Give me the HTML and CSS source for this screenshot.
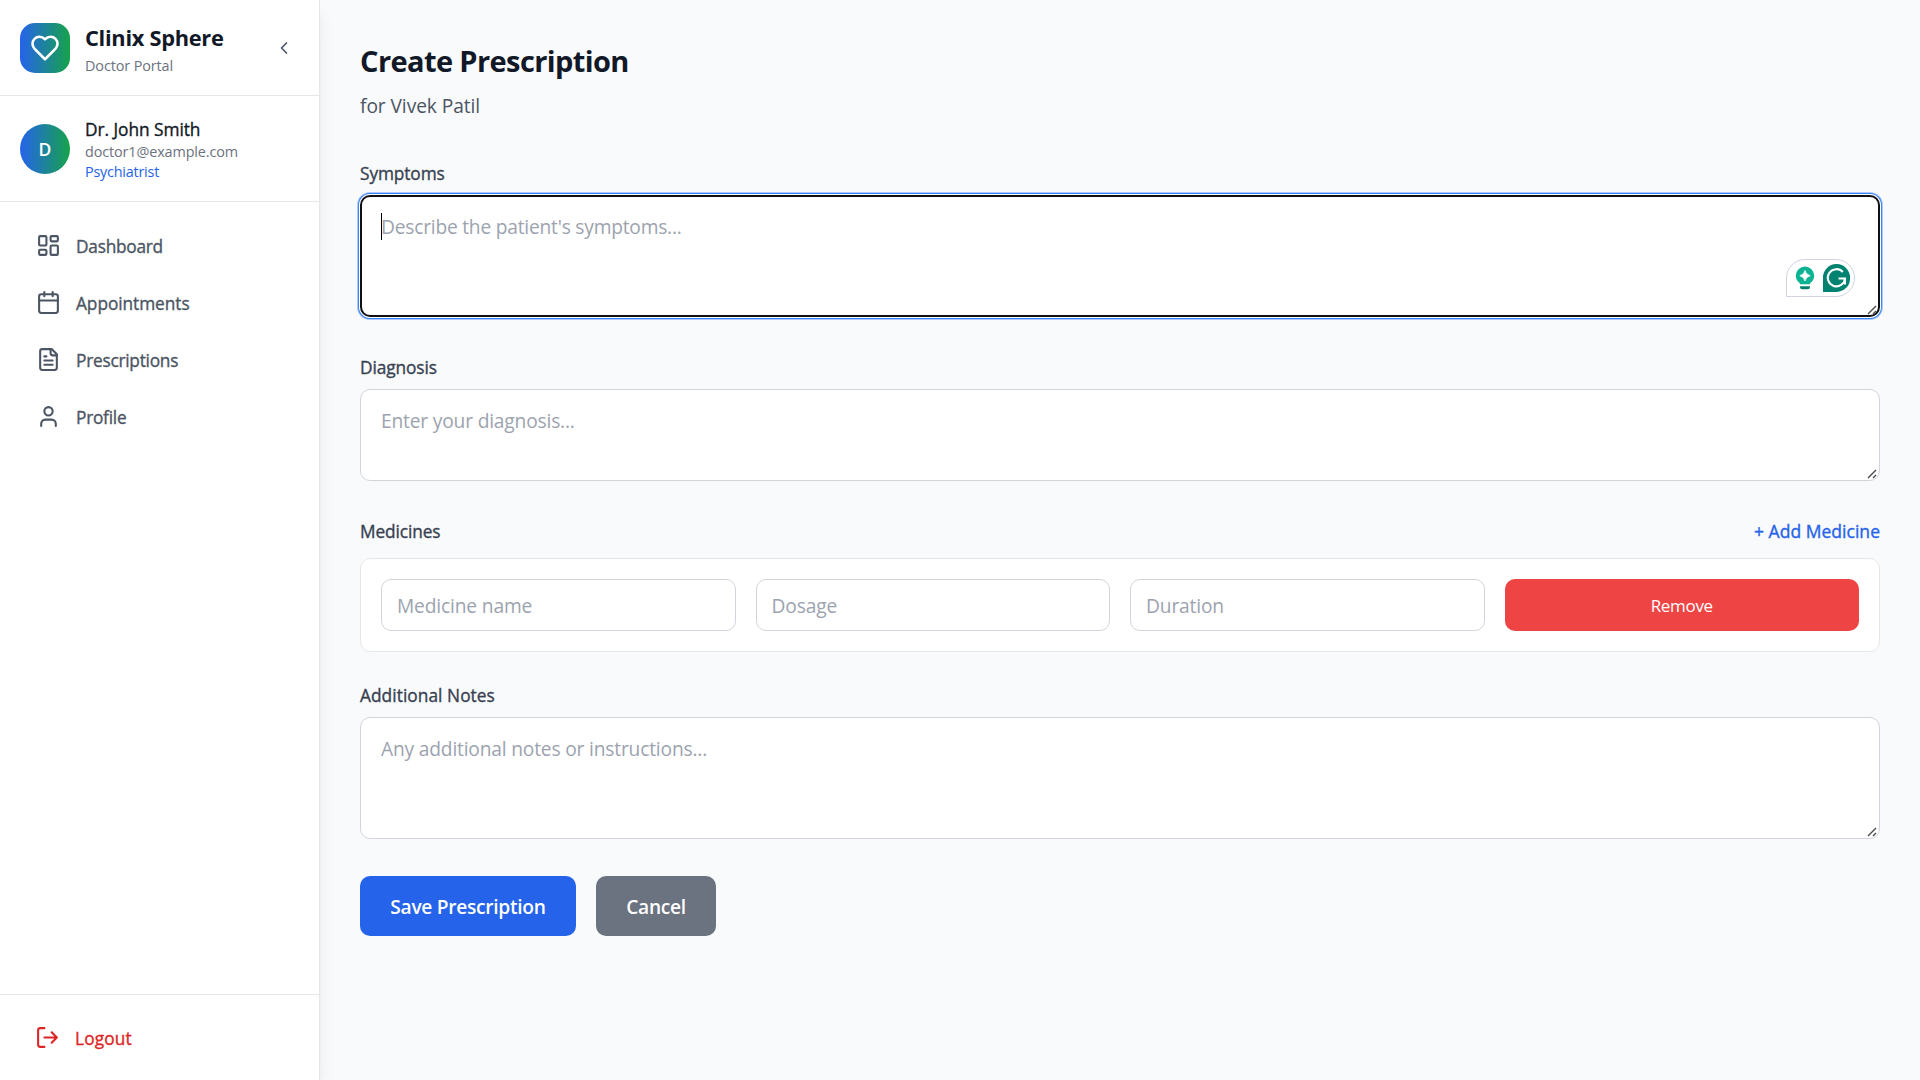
FILE: index.html
```html
<!DOCTYPE html>
<html lang="en">
<head>
<meta charset="utf-8">
<title>Clinix Sphere - Create Prescription</title>
<link rel="stylesheet" href="styles.css">
</head>
<body>
<div class="app">
  <aside class="sidebar">
    <header class="brand">
      <div class="brand-logo">
        <svg class="icon icon-heart" viewBox="0 0 24 24"><path d="M19 14c1.49-1.46 3-3.21 3-5.5A5.5 5.5 0 0 0 16.5 3c-1.76 0-3 .5-4.5 2-1.5-1.5-2.740-2-4.500-2A5.500 5.500 0 0 0 2 8.500c0 2.300 1.500 4.050 3 5.500l7 7Z"/></svg>
      </div>
      <div class="brand-text">
        <h1 class="brand-name">Clinix Sphere</h1>
        <p class="brand-sub">Doctor Portal</p>
      </div>
      <button class="collapse" type="button" aria-label="Collapse sidebar">
        <svg class="icon icon-chevron" viewBox="0 0 24 24"><path d="m15 18-6-6 6-6"/></svg>
      </button>
    </header>
    <section class="user">
      <div class="avatar">D</div>
      <div class="user-text">
        <p class="user-name">Dr. John Smith</p>
        <p class="user-mail">doctor1@example.com</p>
        <p class="user-role">Psychiatrist</p>
      </div>
    </section>
    <nav class="nav">
      <a class="nav-item"><svg class="icon" viewBox="0 0 24 24"><rect width="7" height="9" x="3" y="3" rx="1"/><rect width="7" height="5" x="14" y="3" rx="1"/><rect width="7" height="9" x="14" y="12" rx="1"/><rect width="7" height="5" x="3" y="16" rx="1"/></svg><span>Dashboard</span></a>
      <a class="nav-item nav-wide"><svg class="icon" viewBox="0 0 24 24"><path d="M8 2v4M16 2v4"/><rect width="18" height="18" x="3" y="4" rx="2"/><path d="M3 10h18"/></svg><span>Appointments</span></a>
      <a class="nav-item"><svg class="icon" viewBox="0 0 24 24"><path d="M15 2H6a2 2 0 0 0-2 2v16a2 2 0 0 0 2 2h12a2 2 0 0 0 2-2V7Z"/><path d="M14 2v4a2 2 0 0 0 2 2h4M10 9H8M16 13H8M16 17H8"/></svg><span>Prescriptions</span></a>
      <a class="nav-item"><svg class="icon" viewBox="0 0 24 24"><path d="M19 21v-2a4 4 0 0 0-4-4H9a4 4 0 0 0-4 4v2"/><circle cx="12" cy="7" r="4"/></svg><span>Profile</span></a>
    </nav>
    <footer class="sidebar-foot">
      <a class="logout"><svg class="icon" viewBox="0 0 24 24"><path d="M9 21H5a2 2 0 0 1-2-2V5a2 2 0 0 1 2-2h4M16 17l5-5-5-5M21 12H9"/></svg><span>Logout</span></a>
    </footer>
  </aside>

  <main class="main">
    <h2 class="page-title">Create Prescription</h2>
    <p class="page-sub">for Vivek Patil</p>

    <form class="form">
      <div class="field">
        <label class="label">Symptoms</label>
        <div class="area-wrap">
          <textarea class="area area-tall area-focus" placeholder="Describe the patient's symptoms..."></textarea>
          <span class="caret"></span>
          <div class="assist">
            <svg class="assist-bulb" viewBox="0 0 20 24"><path d="M10 .5a9.200 9.200 0 0 0-9.200 9.200c0 3.300 1.700 5.700 4 7.300v1.300h10.400V17c2.300-1.600 4-4 4-7.300A9.200 9.200 0 0 0 10 .5Z" fill="#0bb392"/><path d="M10 4.500q1 4.200 5.200 5.200-4.200 1-5.200 5.200-1-4.200-5.200-5.200 4.200-1 5.200-5.200Z" fill="#fff" stroke="#fff" stroke-width=".8"/><path d="M5 20.200h10v.8a2.300 2.300 0 0 1-2.300 2.300H7.300A2.300 2.300 0 0 1 5 21Z" fill="#00806c"/></svg>
            <svg class="assist-g" viewBox="0 0 27 28"><path d="M13.500 0A13.500 13.500 0 0 1 27 14a13.500 13.500 0 0 1-13.500 14H0V14A13.500 13.500 0 0 1 13.500 0Z" fill="#028270"/><path d="M19.800 8A8.600 8.600 0 1 0 22 14.500H15.500M22 14.500V20.500" fill="none" stroke="#fff" stroke-width="2.100"/></svg>
          </div>
          <svg class="grip" viewBox="0 0 10 10"><path d="M1 9 9 1M6 9 9 6"/></svg>
        </div>
      </div>

      <div class="field">
        <label class="label">Diagnosis</label>
        <div class="area-wrap">
          <textarea class="area area-short" placeholder="Enter your diagnosis..."></textarea>
          <svg class="grip" viewBox="0 0 10 10"><path d="M1 9 9 1M6 9 9 6"/></svg>
        </div>
      </div>

      <div class="field medicines">
        <div class="label-row">
          <label class="label">Medicines</label>
          <button class="add" type="button">+ Add Medicine</button>
        </div>
        <div class="medicine-card">
          <input class="input" type="text" placeholder="Medicine name">
          <input class="input" type="text" placeholder="Dosage">
          <input class="input" type="text" placeholder="Duration">
          <button class="remove" type="button">Remove</button>
        </div>
      </div>

      <div class="field">
        <label class="label label-notes">Additional Notes</label>
        <div class="area-wrap">
          <textarea class="area area-tall" placeholder="Any additional notes or instructions..."></textarea>
          <svg class="grip" viewBox="0 0 10 10"><path d="M1 9 9 1M6 9 9 6"/></svg>
        </div>
      </div>

      <div class="actions">
        <button class="btn btn-save" type="button">Save Prescription</button>
        <button class="btn btn-cancel" type="button">Cancel</button>
      </div>
    </form>
  </main>
</div>
</body>
</html>
```
FILE: styles.css
```css
* { box-sizing: border-box; margin: 0; padding: 0; }

body {
  font-family: "Open Sans", "Noto Sans", sans-serif;
  color: #111827;
  background: #f9fafb;
}

button, input, textarea { font: inherit; border: 0; background: none; letter-spacing: inherit; }

.app { display: flex; height: 1080px; overflow: hidden; }

.icon {
  width: 25px;
  height: 25px;
  flex: none;
  fill: none;
  stroke: currentColor;
  stroke-width: 2;
  stroke-linecap: round;
  stroke-linejoin: round;
}

/* Sidebar */
.sidebar {
  width: 320px;
  flex: none;
  display: flex;
  flex-direction: column;
  background: #fff;
  border-right: 1px solid #e5e7eb;
  box-shadow: 0 12px 19px -4px rgba(0, 0, 0, .1), 0 5px 8px -5px rgba(0, 0, 0, .1);
}

.brand {
  height: 96px;
  padding: 0 20px;
  display: flex;
  align-items: center;
  gap: 15px;
  border-bottom: 1px solid #e5e7eb;
}
.brand-logo {
  width: 50px;
  height: 50px;
  display: grid;
  place-items: center;
  border-radius: 15px;
  color: #fff;
  background: linear-gradient(to right, #2563eb, #16a34a);
}
.icon-heart { width: 30px; height: 30px; }
.brand-text { flex: 1; }
.brand-name { font-size: 21.800px; line-height: 35px; font-weight: 700; letter-spacing: -.28px; }
.brand-sub { padding-top: 1px; margin-bottom: -1px; font-size: 14.400px; line-height: 20px; letter-spacing: -.1px; color: #6b7280; }
.collapse { display: flex; padding: 5px; color: #4b5563; }
.icon-chevron { width: 20px; height: 20px; }

.user {
  height: 106px;
  padding: 0 20px;
  display: flex;
  align-items: center;
  gap: 15px;
  border-bottom: 1px solid #e5e7eb;
}
.avatar {
  width: 50px;
  height: 50px;
  border-radius: 50%;
  display: grid;
  place-items: center;
  font-size: 17.500px;
  font-weight: 600;
  color: #fff;
  background: linear-gradient(to right, #2563eb, #16a34a);
}
.user-text { padding-top: 2px; }
.user-name { font-size: 17.300px; line-height: 25px; font-weight: 500; letter-spacing: -.04px; }
.user-mail, .user-role { font-size: 14.400px; line-height: 20px; letter-spacing: -.12px; }
.user-mail { color: #6b7280; }
.user-role { color: #2563eb; letter-spacing: -.22px; }

/* Thickens the regular cut to a medium weight */
.user-name, .nav-item span, .logout span, .label, .add { -webkit-text-stroke: .35px currentColor; }

.nav { flex: 1; display: flex; flex-direction: column; gap: 10px; padding: 20px; }
.nav-item, .logout {
  height: 47px;
  display: flex;
  align-items: center;
  gap: 15px;
  padding: 0 16px;
  font-size: 17.300px;
  font-weight: 500;
  letter-spacing: -.25px;
  color: #4b5563;
}
.nav-item span, .logout span { padding-top: 2px; }
.nav-wide { letter-spacing: -.06px; }
.sidebar-foot { padding: 20px; border-top: 1px solid #e5e7eb; }
.logout { height: 45px; padding: 0 15px; color: #dc2626; letter-spacing: .15px; }

/* Main column */
.main { flex: 1; padding: 41px 40px 0; }
.page-title { font-size: 29px; line-height: 40px; font-weight: 700; letter-spacing: -.6px; }
.page-sub { margin-top: 10px; font-size: 19.200px; line-height: 30px; letter-spacing: -.08px; color: #4b5563; }
.form { margin-top: 39px; display: flex; flex-direction: column; gap: 37px; }
.field { display: flex; flex-direction: column; gap: 10px; }
.label {
  padding-top: 1px;
  margin-bottom: -1px;
  font-size: 17.300px;
  line-height: 25px;
  font-weight: 500;
  letter-spacing: -.1px;
  color: #374151;
}
.label-notes { letter-spacing: .06px; }

.area-wrap { position: relative; display: flex; }
.area {
  width: 100%;
  padding: 16px 20px 14px;
  border: 1px solid #d1d5db;
  border-radius: 10px;
  background: #fff;
  font-size: 19.200px;
  line-height: 30px;
  letter-spacing: -.18px;
  resize: none;
  outline: none;
}
.area::placeholder, .input::placeholder { color: #9ca3af; opacity: 1; }
.area-tall { height: 122px; }
.area-short { height: 92px; }
.area-focus {
  padding: 15px 19px 13px;
  border: 2px solid #101010;
  letter-spacing: -.22px;
  box-shadow: 0 0 0 1px #fff, 0 0 0 2px #3b82f6, 0 0 0 3px #a9c8fb;
}
.caret { position: absolute; left: 21px; top: 18px; width: 1px; height: 27px; background: #000; }
.grip { position: absolute; right: 3px; bottom: 2px; width: 10px; height: 10px; fill: none; stroke: #4a4a4a; stroke-width: 1.400; }

.assist {
  position: absolute;
  right: 25px;
  bottom: 20px;
  width: 69px;
  height: 38px;
  display: flex;
  align-items: center;
  gap: 8px;
  padding-left: 8px;
  border: 1px solid #cfd3e2;
  border-radius: 19px 19px 19px 0;
  background: #fff;
}
.assist-bulb { width: 20px; height: 24px; }
.assist-g { width: 27px; height: 28px; }

/* Medicines */
.medicines { gap: 15px; margin-bottom: -7px; }
.label-row { display: flex; justify-content: space-between; height: 25px; }
.add { padding-top: 1px; font-size: 17.500px; line-height: 25px; font-weight: 500; letter-spacing: .03px; color: #2563eb; }
.medicine-card {
  display: grid;
  grid-template-columns: repeat(4, 1fr);
  gap: 20px;
  padding: 20px;
  height: 94px;
  border: 1px solid #e5e7eb;
  border-radius: 10px;
  background: #fff;
}
.input {
  min-width: 0;
  padding: 1px 15px 0;
  border: 1px solid #d1d5db;
  border-radius: 10px;
  font-size: 19.200px;
  letter-spacing: -.15px;
}
.remove { padding-top: 1px; border-radius: 10px; background: #ef4444; color: #fff; font-size: 17px; letter-spacing: -.3px; }

/* Form actions */
.actions { display: flex; gap: 20px; }
.btn {
  height: 60px;
  padding-top: 1px;
  border-radius: 10px;
  color: #fff;
  font-size: 19.200px;
  font-weight: 600;
  letter-spacing: -.3px;
}
.btn-save { width: 216px; background: #2563eb; }
.btn-cancel { width: 120px; background: #6b7280; }
```
